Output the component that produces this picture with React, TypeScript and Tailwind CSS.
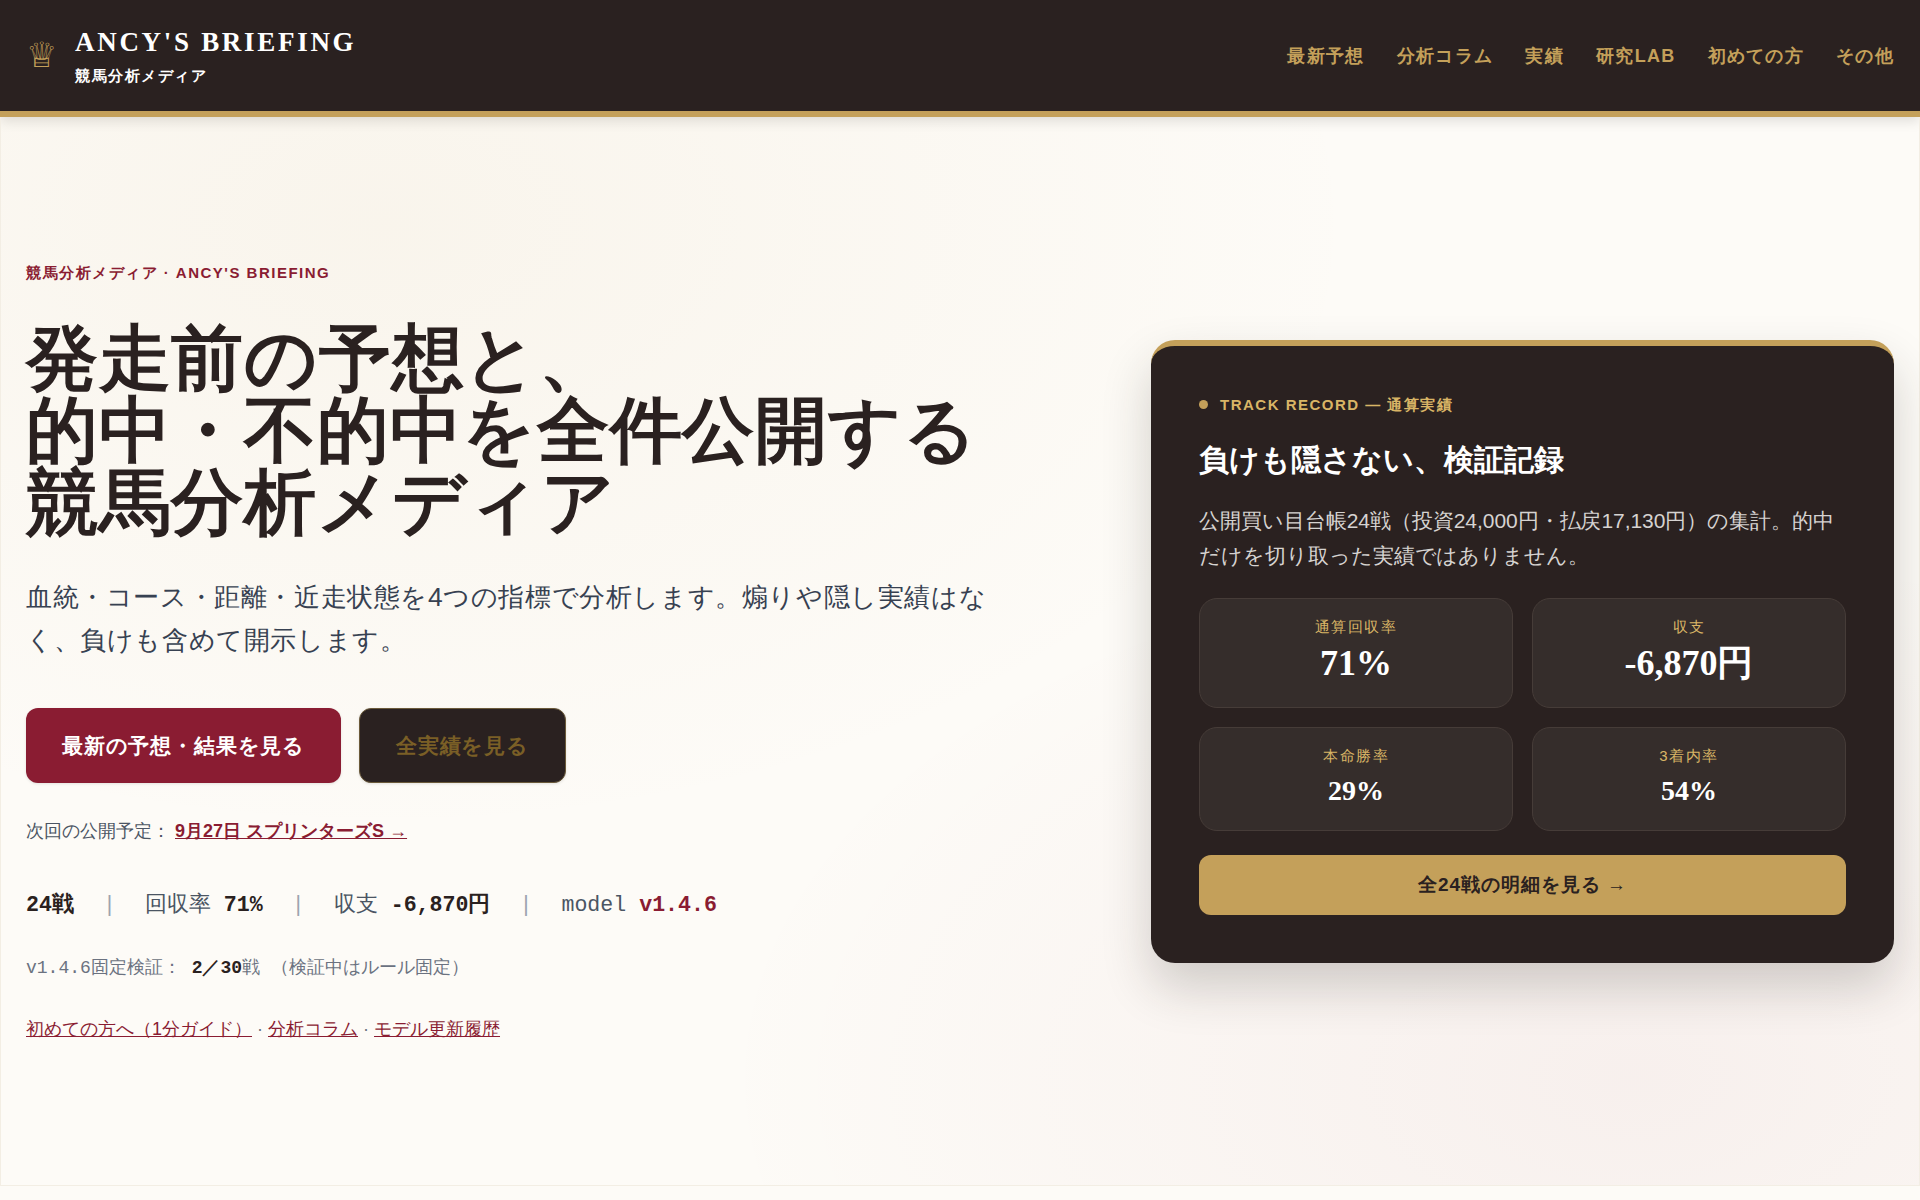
function Stat({ label, value, big }: { label: string; value: string; big?: boolean }) {
  return (
    <div className="rounded-[18px] border border-[#463c38] bg-[#352d2b] px-4 pt-[18px] pb-[20px] text-center">
      <div className="text-[15px] leading-[20px] tracking-[0.1em] text-[#d9b566]">{label}</div>
      <div
        className={
          big
            ? "mt-[2px] font-['Liberation_Serif',serif] text-[36px] leading-[48px] font-bold text-white"
            : "mt-[5px] font-['Liberation_Serif',serif] text-[28px] leading-[39px] font-bold text-white"
        }
      >
        {value}
      </div>
    </div>
  );
}

const nav = ["最新予想", "分析コラム", "実績", "研究LAB", "初めての方", "その他"];

export default function App() {
  return (
    <div className="flex min-h-[1200px] flex-col bg-[#fdfbf7] font-['Liberation_Sans',sans-serif] text-[#2a2120]">
      <header className="flex h-[117px] items-center justify-between border-b-[6px] border-[#c4a05a] bg-[#2a2120] px-[26px] shadow-[0_4px_12px_rgba(0,0,0,0.12)]">
        <div className="flex items-center gap-[18px]">
          <span className="pb-[2px] text-[35px] leading-none text-[#c4a05a]">♕</span>
          <div>
            <div className="font-['Liberation_Serif',serif] text-[27px] leading-[34px] font-bold tracking-[0.1em] text-white">
              ANCY'S BRIEFING
            </div>
            <div className="mt-[6px] text-[15px] leading-[22px] font-semibold tracking-[0.1em] text-white">
              競馬分析メディア
            </div>
          </div>
        </div>
        <nav className="flex gap-[32.25px] pt-[2px]">
          {nav.map((n) => (
            <a key={n} className="text-[18px] font-semibold tracking-[0.07em] text-[#c4a05a]">
              {n}
            </a>
          ))}
        </nav>
      </header>

      <main className="mb-[14px] grid flex-1 grid-cols-[1fr_743px] items-center gap-[100px] border-x border-b border-[#f3eee4] bg-[radial-gradient(ellipse_at_85%_90%,rgba(138,28,50,0.05),transparent_40%),radial-gradient(ellipse_at_20%_10%,rgba(196,160,90,0.07),transparent_45%)] pr-[25px] pl-[25px]">
        <section className="pt-[2px]">
          <div className="text-[15px] leading-[22px] font-bold tracking-[0.1em] text-[#8a1c32]">
            競馬分析メディア · ANCY'S BRIEFING
          </div>
          <h1 className="mt-[39.5px] font-['Liberation_Serif',serif] text-[72px] leading-[72px] font-bold tracking-[0.01em] text-[#2a2120]">
            発走前の予想と、
            <br />
            的中・不的中を全件公開する
            <br />
            競馬分析メディア
          </h1>
          <p className="mt-[37px] w-[980px] text-[26.4px] leading-[42.5px] tracking-[0.6px] text-[#374151]">
            血統・コース・距離・近走状態を4つの指標で分析します。煽りや隠し実績はなく、負けも含めて開示します。
          </p>
          <div className="mt-[47px] flex gap-[18px]">
            <a className="flex h-[75px] w-[315px] items-center justify-center rounded-[12px] bg-[#8a1c32] text-[21px] font-bold tracking-[0.04em] text-white shadow-[0_1px_3px_rgba(0,0,0,0.1)]">
              最新の予想・結果を見る
            </a>
            <a className="flex h-[75px] w-[207px] items-center justify-center rounded-[12px] border border-[#6b5a3a] bg-[#2a2120] text-[21px] font-bold tracking-[0.04em] text-[#7a5f26] shadow-[0_1px_3px_rgba(0,0,0,0.1)]">
              全実績を見る
            </a>
          </div>
          <div className="mt-[35px] text-[18px] leading-[26px] text-[#4b5563]">
            次回の公開予定：{" "}
            <a className="font-bold text-[#8a1c32] underline">9月27日 スプリンターズS →</a>
          </div>
          <div className="mt-[46px] flex items-center gap-[29px] font-['Liberation_Mono',monospace] text-[21.6px] leading-[30px] text-[#4b5563]">
            <span className="font-bold text-[#2a2120]">24戦</span>
            <span className="text-[#9ca3af]">|</span>
            <span>
              回収率 <b className="text-[#2a2120]">71%</b>
            </span>
            <span className="text-[#9ca3af]">|</span>
            <span>
              収支 <b className="text-[#2a2120]">-6,870円</b>
            </span>
            <span className="text-[#9ca3af]">|</span>
            <span>
              model <b className="text-[#8a1c32]">v1.4.6</b>
            </span>
          </div>
          <div className="mt-[35px] font-['Liberation_Mono',monospace] text-[18px] leading-[26px] text-[#6b7280]">
            v1.4.6固定検証： <b className="text-[#2a2120]">2／30</b>戦 （検証中はルール固定）
          </div>
          <div className="mt-[35px] text-[18px] leading-[26px] text-[#8a1c32]">
            <a className="underline">初めての方へ（1分ガイド）</a>
            <span className="text-[#6b7280]"> · </span>
            <a className="underline">分析コラム</a>
            <span className="text-[#6b7280]"> · </span>
            <a className="underline">モデル更新履歴</a>
          </div>
        </section>

        <aside className="rounded-[24px] border-t-[6px] border-[#c4a05a] bg-[#2a2120] px-[48px] pt-[48px] pb-[48px] shadow-[0_24px_50px_rgba(42,33,32,0.2)]">
          <div className="flex items-center gap-[12px] text-[15px] leading-[22px] font-bold tracking-[0.1em] text-[#d9b566]">
            <span className="h-[9px] w-[9px] rounded-full bg-[#c4a05a]" />
            TRACK RECORD — 通算実績
          </div>
          <h2 className="mt-[22px] font-['Liberation_Serif',serif] text-[30.1px] leading-[44px] font-bold text-white">
            負けも隠さない、検証記録
          </h2>
          <p className="mt-[21px] text-[21px] leading-[35.5px] tracking-[-0.05px] text-[#d6d3d1]">
            公開買い目台帳24戦（投資24,000円・払戻17,130円）の集計。的中だけを切り取った実績ではありません。
          </p>
          <div className="mt-[24px] grid grid-cols-2 gap-[19px]">
            <Stat label="通算回収率" value="71%" big />
            <Stat label="収支" value="-6,870円" big />
            <Stat label="本命勝率" value="29%" />
            <Stat label="3着内率" value="54%" />
          </div>
          <a className="mt-[24px] flex h-[60px] items-center justify-center rounded-[12px] bg-[#c4a05a] pt-[1px] text-[19px] font-bold tracking-[0.05em] text-[#2a2120]">
            全24戦の明細を見る →
          </a>
        </aside>
      </main>
    </div>
  );
}
